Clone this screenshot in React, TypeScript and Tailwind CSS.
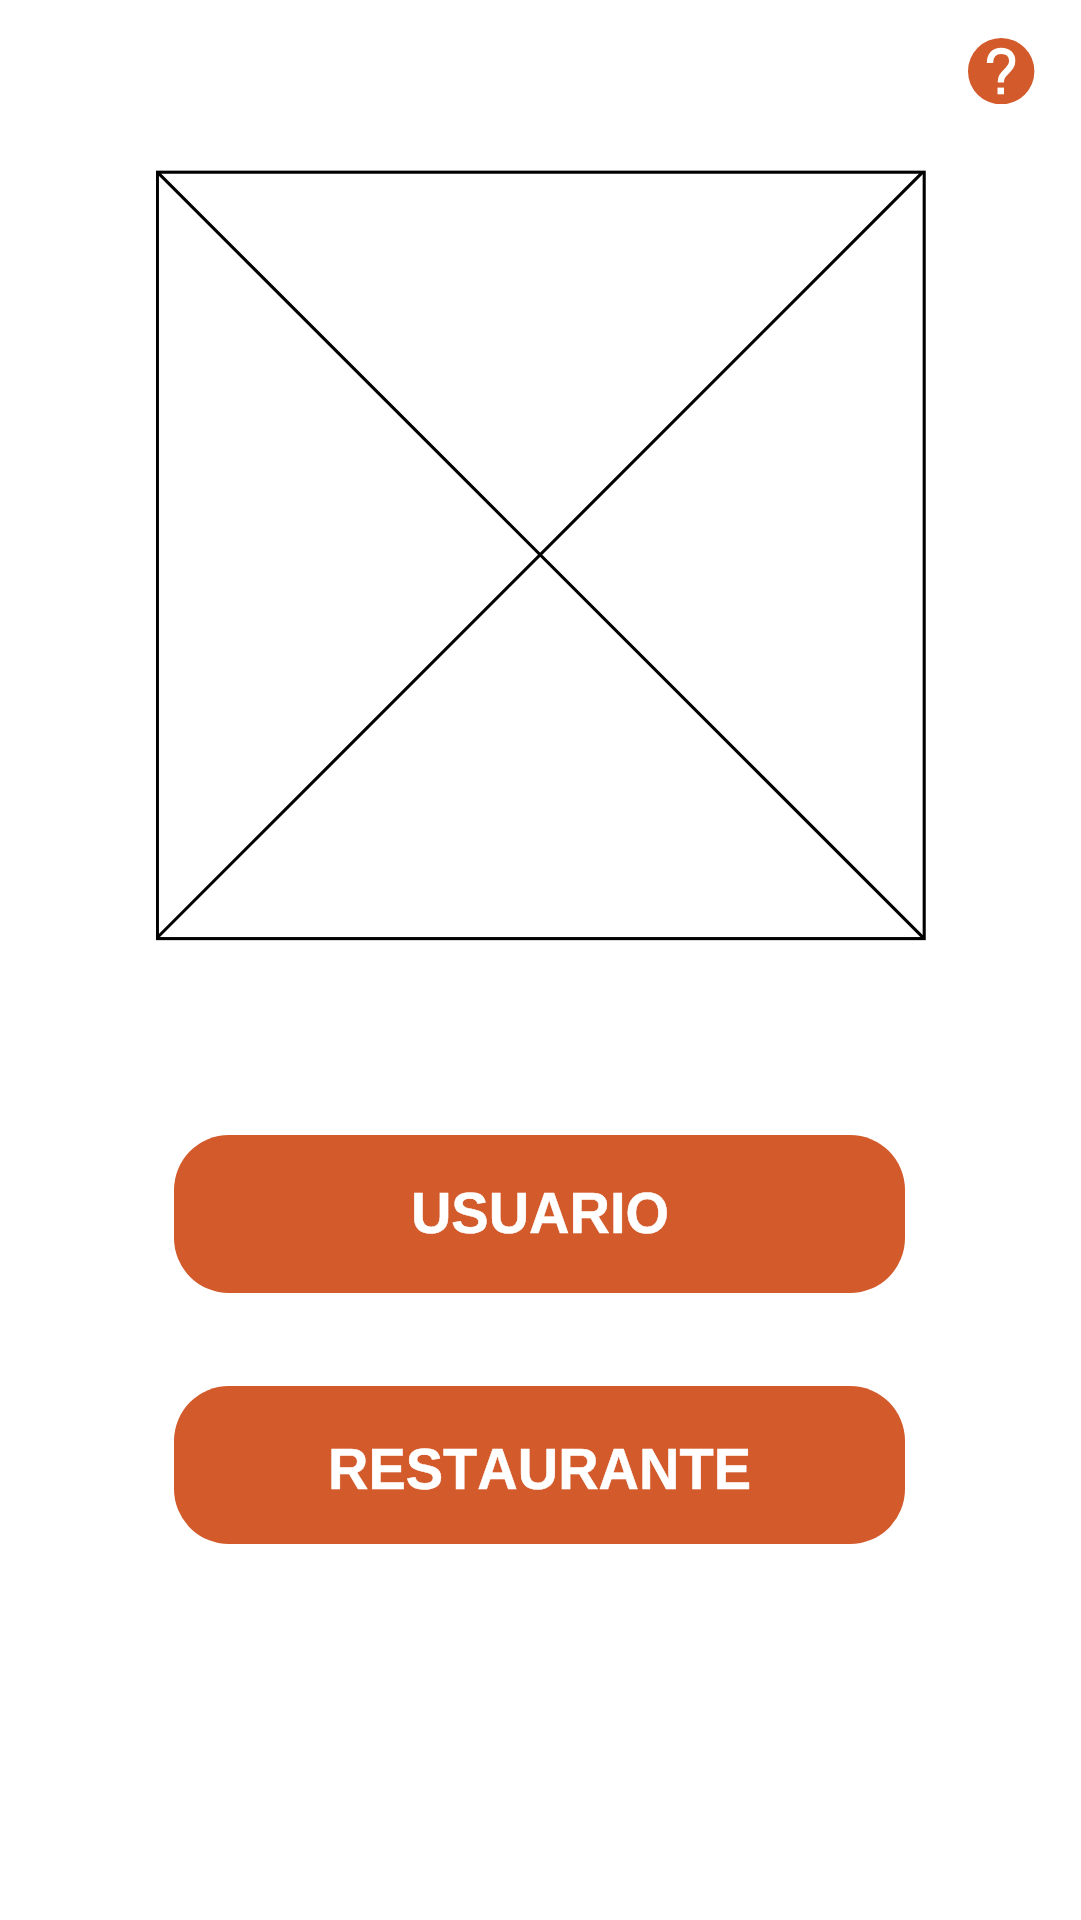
type RoleButtonProps = { label: string; className: string; labelClassName: string };

function RoleButton({ label, className, labelClassName }: RoleButtonProps) {
  return (
    <button
      type="button"
      className={`flex w-[731px] items-center justify-center rounded-[55px] bg-[#d35a2b] text-[56px] leading-none font-bold text-white [font-kerning:none] ${className}`}
    >
      <span className={`block scale-y-[1.03] [-webkit-text-stroke:0.5px_white] ${labelClassName}`}>{label}</span>
    </button>
  );
}

function HelpIcon() {
  return (
    <svg className="block h-[66.4px] w-[66.4px]" viewBox="0 0 66.4 66.4" fill="none" aria-hidden="true">
      <circle cx="33.2" cy="33.2" r="33.2" fill="#d35a2b" />
      <path
        d="M22 25C22 17.2 26.2 12.8 33.3 12.8C40 12.8 44.2 17 44.2 23C44.2 27.6 41.8 30 38.6 33.2C34.6 37.2 32.8 39.2 32.8 44.5"
        stroke="#fff"
        strokeWidth="6.3"
      />
      <rect x="29.5" y="49.6" width="6.5" height="6.7" fill="#fff" />
    </svg>
  );
}

function ImagePlaceholder() {
  return (
    <svg
      className="mt-[66px] ml-[156px] block h-[771px] w-[770px]"
      viewBox="0 0 770 771"
      fill="none"
      stroke="#000"
      strokeWidth="3.1"
      aria-hidden="true"
    >
      <rect x="1.4" y="2.2" width="766.8" height="766.4" />
      <path d="M1.4 2.2 768.2 768.6M766.7 2.2 1.4 767.5" />
    </svg>
  );
}

export default function App() {
  return (
    <main className="flex h-[1920px] w-[1081px] flex-col overflow-hidden bg-white font-['Liberation_Sans',Arial,sans-serif]">
      <header className="flex h-[104px] items-end justify-end pr-[46.5px]">
        <button type="button" aria-label="Ayuda" className="rounded-full">
          <HelpIcon />
        </button>
      </header>
      <ImagePlaceholder />
      <nav className="mt-[194px] ml-[174px] flex flex-col gap-[92.8px]">
        <RoleButton label="USUARIO" className="h-[158.2px]" labelClassName="pb-[2px] pl-px" />
        <RoleButton label="RESTAURANTE" className="h-[158px]" labelClassName="pt-[8px]" />
      </nav>
    </main>
  );
}
